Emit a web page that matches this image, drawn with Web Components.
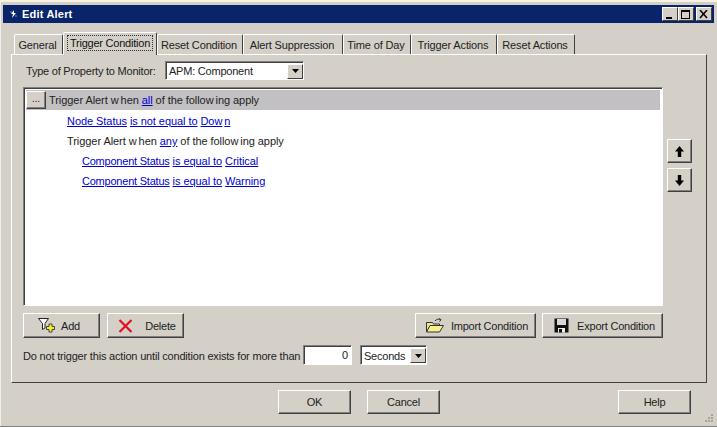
<!DOCTYPE html>
<html>
<head>
<meta charset="utf-8">
<title>Edit Alert</title>
<style>
  html, body { margin: 0; padding: 0; background: #d4d0c8; overflow: hidden; }
  body { font: 11px "Liberation Sans", Arial, sans-serif; color: #111; letter-spacing: -0.22px; }
  svg { display: block; }
</style>
</head>
<body>
<edit-alert-dialog></edit-alert-dialog>

<script>
const tpl = (html) => {
  const t = document.createElement('template');
  t.innerHTML = html;
  return t;
};

class Base extends HTMLElement {
  constructor() {
    super();
    this.attachShadow({ mode: 'open' }).appendChild(this.constructor.template.content.cloneNode(true));
  }
}

class TitleBar extends Base {
  static template = tpl(`
    <style>
      :host { display: flex; align-items: center; height: 18px; background: #0a246a; color: #fff; font: bold 11px "Liberation Sans", Arial, sans-serif; letter-spacing: .2px; padding: 0 2px 0 6px; }
      .icon { margin-right: 4px; }
      .text { flex: 1; }
      .btns { display: flex; }
      .b { width: 16px; height: 14px; box-sizing: border-box; background: #d4d0c8; border: 1px solid; border-color: #fff #404040 #404040 #fff; display: flex; align-items: center; justify-content: center; }
      .b.gap { margin-left: 2px; }
    </style>
    <svg class="icon" width="9" height="10" viewBox="0 0 9 10"><path d="M5 1 2 5h2L3 9l4-5H5z" fill="#fff"/><path d="M1 3h2M6 7h2" stroke="#6d8ce0"/></svg>
    <span class="text"><slot></slot></span>
    <div class="btns">
      <div class="b"><svg width="10" height="9"><rect x="1" y="7" width="6" height="2" fill="#000"/></svg></div>
      <div class="b"><svg width="10" height="9"><rect x=".5" y=".5" width="8" height="8" fill="none" stroke="#000"/><rect x="0" y="0" width="9" height="2" fill="#000"/></svg></div>
      <div class="b gap"><svg width="10" height="9"><path d="M1 0l7 8M8 0 1 8" stroke="#000" stroke-width="1.5" fill="none"/></svg></div>
    </div>
  `);
}

class TabStrip extends Base {
  static template = tpl(`
    <style>
      :host { display: flex; align-items: flex-end; height: 23px; padding-left: 3px; position: relative; z-index: 1; margin-bottom: -1px; }
    </style>
    <slot></slot>
  `);
}

class TabItem extends Base {
  static template = tpl(`
    <style>
      :host { display: flex; align-items: center; justify-content: center; box-sizing: border-box; height: 20px; margin-bottom: 1px; padding-right: 2px; background: #d4d0c8; border: 1px solid; border-color: #fff #404040 transparent #fff; border-bottom: 0; border-radius: 2px 2px 0 0; white-space: nowrap; color: #222; letter-spacing: -0.14px; }
      :host([active]) { height: 23px; margin-bottom: 0; padding: 0 0 3px; color: #111; letter-spacing: -0.22px; }
      :host([active]) span { outline: 1px dotted #333; padding: 1px 2px; }
    </style>
    <span><slot></slot></span>
  `);
}

class WinButton extends Base {
  static template = tpl(`
    <style>
      :host { display: inline-flex; align-items: center; justify-content: center; box-sizing: border-box; background: #d4d0c8; border: 1px solid; border-color: #fff #404040 #404040 #fff; box-shadow: inset -1px -1px 0 #808080; color: #222; white-space: nowrap; }
      ::slotted(svg) { flex: none; }
    </style>
    <slot></slot>
  `);
}

class WinSelect extends Base {
  static template = tpl(`
    <style>
      :host { display: flex; align-items: center; box-sizing: border-box; height: 19px; background: #fff; border: 1px solid; border-color: #808080 #fff #fff #808080; box-shadow: inset 1px 1px 0 #404040; padding: 2px 0 1px 3px; color: #222; }
      .v { flex: 1; }
      .arrow { width: 16px; height: 15px; box-sizing: border-box; background: #d4d0c8; border: 1px solid; border-color: #fff #404040 #404040 #fff; display: flex; align-items: center; justify-content: center; }
    </style>
    <span class="v"><slot></slot></span>
    <span class="arrow"><svg width="7" height="4"><path d="M0 0h7L3.5 4z" fill="#000"/></svg></span>
  `);
}

class ConditionRow extends Base {
  static template = tpl(`
    <style>
      :host { display: flex; align-items: center; height: 20px; white-space: pre; color: #222; letter-spacing: -0.06px; }
      :host([head]) { background: #c2c0c2; }
      ::slotted(a) { color: #0000d0; text-decoration: underline; }
      ::slotted(a.tight) { letter-spacing: -0.22px; }
    </style>
    <slot name="btn"></slot>
    <span><slot></slot></span>
  `);
}

class ConditionList extends Base {
  static template = tpl(`
    <style>
      :host { display: block; box-sizing: border-box; width: 640px; height: 219px; background: #fff; border: 1px solid; border-color: #808080 #fff #fff #808080; box-shadow: inset 1px 1px 0 #404040; padding: 2px 2px 0 2px; }
      .body { display: flex; flex-direction: column; padding-top: 1px; }
    </style>
    <slot name="head"></slot>
    <div class="body"><slot></slot></div>
  `);
}

class EditAlertDialog extends Base {
  static template = tpl(`
    <style>
      :host { display: block; box-sizing: border-box; width: 717px; height: 427px; padding: 5px 3px 0; background: #d4d0c8; position: relative; border-bottom: 1px solid #808080; box-shadow: inset 0 2px 0 #f7f3e3, inset 1px 0 0 #eee; overflow: hidden; }
      .tabs-wrap { padding: 9px 0 0 8px; }
      .panel { box-sizing: border-box; width: 696px; height: 329px; border: 1px solid; border-color: #fff #404040 #404040 #fff; padding: 6px 0 0 11px; }
      .type { display: flex; align-items: center; height: 19px; color: #222; }
      .type label { width: 131px; padding-left: 3px; margin-right: 8px; white-space: nowrap; }
      .type win-select { width: 139px; }
      .main { display: flex; margin-top: 7px; }
      .arrows { display: flex; flex-direction: column; gap: 5px; margin: 52px 0 0 4px; }
      .arrows win-button { width: 25px; height: 24px; }
      .actions { display: flex; justify-content: space-between; width: 640px; margin-top: 7px; }
      .actions div { display: flex; gap: 7px; }
      .actions div + div { gap: 6px; }
      .actions win-button { height: 25px; }
      .add { width: 77px; gap: 6px; padding-right: 5px; }
      .del { width: 77px; gap: 12px; padding-left: 3px; }
      .imp { width: 121px; gap: 7px; padding-left: 3px; }
      .exp { width: 121px; gap: 8px; padding-left: 4px; }
      .until { display: flex; align-items: center; margin-top: 7px; height: 20px; color: #222; }
      .until .label { width: 280px; white-space: nowrap; letter-spacing: -0.19px; padding-top: 1px; }
      .num { box-sizing: border-box; width: 49px; height: 20px; background: #fff; border: 1px solid; border-color: #808080 #fff #fff #808080; box-shadow: inset 1px 1px 0 #404040; text-align: right; padding: 3px 3px 0 0; }
      .until win-select { width: 67px; height: 20px; margin-left: 8px; }
      .footer { display: flex; margin-top: 7px; padding-left: 275px; gap: 16px; }
      .footer win-button { width: 73px; height: 24px; }
      .help { margin-left: 162px; }
      .grip { position: absolute; right: 2px; bottom: 1px; }
      .more { width: 20px; height: 18px; margin: 0 3px 0 0; font-size: 10px; padding-bottom: 3px; }
    </style>
    <title-bar>Edit Alert</title-bar>
    <div class="tabs-wrap">
      <tab-strip>
        <tab-item style="width:49px">General</tab-item>
        <tab-item active style="width:94px">Trigger Condition</tab-item>
        <tab-item style="width:86px">Reset Condition</tab-item>
        <tab-item style="width:100px">Alert Suppression</tab-item>
        <tab-item style="width:68px">Time of Day</tab-item>
        <tab-item style="width:86px">Trigger Actions</tab-item>
        <tab-item style="width:78px">Reset Actions</tab-item>
      </tab-strip>
      <div class="panel">
        <div class="type">
          <label>Type of Property to Monitor:</label>
          <win-select>APM: Component</win-select>
        </div>
        <div class="main">
          <condition-list>
            <condition-row head slot="head"><win-button class="more" slot="btn">...</win-button>Trigger Alert w<span style="margin-left:2px">hen</span> <a>all</a> of the follow<span style="margin-left:2px">ing</span> apply</condition-row>
            <condition-row style="padding-left:41px"><a>Node Status</a> <a>is not equal to</a> <a>Dow<span style="margin-left:2px">n</span></a></condition-row>
            <condition-row style="padding-left:41px">Trigger Alert w<span style="margin-left:2px">hen</span> <a>any</a> of the follow<span style="margin-left:2px">ing</span> apply</condition-row>
            <condition-row style="padding-left:56px"><a class="tight">Component Status</a> <a>is equal to</a> <a>Critical</a></condition-row>
            <condition-row style="padding-left:56px"><a class="tight">Component Status</a> <a>is equal to</a> <a>Warning</a></condition-row>
          </condition-list>
          <div class="arrows">
            <win-button><svg width="11" height="11" viewBox="0 0 11 11"><path d="M5.500 0 10 5.500H7.200V11H3.800V5.500H1z" fill="#000"/></svg></win-button>
            <win-button><svg width="11" height="11" viewBox="0 0 11 11"><path d="M5.500 11 10 5.500H7.200V0H3.800v5.500H1z" fill="#000"/></svg></win-button>
          </div>
        </div>
        <div class="actions">
          <div>
            <win-button class="add">
              <svg width="17" height="17" viewBox="0 0 17 17"><path d="M.5 1.500h10L7 6.500V11L4.500 12.500V6.500z" fill="#fff" stroke="#222"/><path d="M11 7h3v2.500h2.500v3H14V15h-3v-2.500H8.500v-3H11z" fill="#f7ee2a" stroke="#333" stroke-width=".9"/></svg>
              Add
            </win-button>
            <win-button class="del">
              <svg width="15" height="14" viewBox="0 0 15 14"><path d="M1.500 1 13.500 13M13.500 1 1.500 13" stroke="#e0101c" stroke-width="2.200" fill="none"/></svg>
              Delete
            </win-button>
          </div>
          <div>
            <win-button class="imp">
              <svg width="18" height="15" viewBox="0 0 18 15"><path d="M.5 4.500h6l1 1.500h6v2H4L.5 14z" fill="#efe98a" stroke="#333"/><path d="M.5 14 4 7.500h13.500L13.500 14z" fill="#f7f28f" stroke="#333"/><path d="M9 3c1.500-2 4-2.500 5.500-1M13 .5l2 1.200-1.500 2" fill="none" stroke="#333"/></svg>
              Import Condition
            </win-button>
            <win-button class="exp">
              <svg width="15" height="15" viewBox="0 0 15 15"><path d="M.5.500h14v14H.5z" fill="#111"/><rect x="3" y="1" width="9" height="6" fill="#d8d8d8"/><rect x="4" y="10" width="7" height="4.500" fill="#eee"/><rect x="5" y="11" width="3" height="3.500" fill="#111"/></svg>
              Export Condition
            </win-button>
          </div>
        </div>
        <div class="until">
          <span class="label">Do not trigger this action until condition exists for more than</span>
          <div class="num">0</div>
          <win-select>Seconds</win-select>
        </div>
      </div>
    </div>
    <div class="footer">
      <win-button>OK</win-button>
      <win-button>Cancel</win-button>
      <win-button class="help">Help</win-button>
    </div>
    <svg class="grip" width="12" height="12" viewBox="0 0 12 12" fill="#a5a29a"><rect x="8" y="1" width="2" height="2"/><rect x="5" y="4" width="2" height="2"/><rect x="8" y="4" width="2" height="2"/><rect x="2" y="7" width="2" height="2"/><rect x="5" y="7" width="2" height="2"/><rect x="8" y="7" width="2" height="2"/></svg>
  `);
}

customElements.define('title-bar', TitleBar);
customElements.define('tab-strip', TabStrip);
customElements.define('tab-item', TabItem);
customElements.define('win-button', WinButton);
customElements.define('win-select', WinSelect);
customElements.define('condition-row', ConditionRow);
customElements.define('condition-list', ConditionList);
customElements.define('edit-alert-dialog', EditAlertDialog);
</script>
</body>
</html>
